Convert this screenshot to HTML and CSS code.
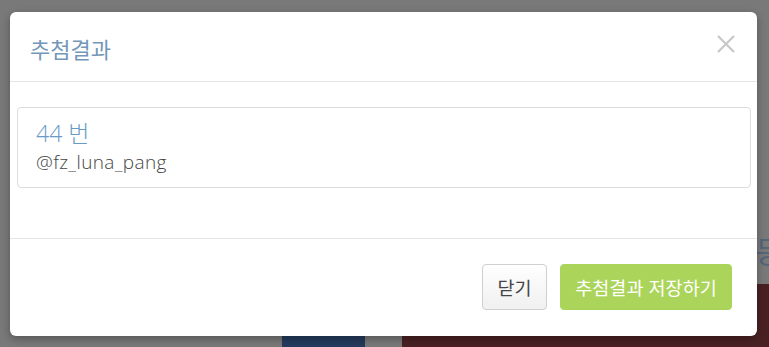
FILE: index.html
```html
<!DOCTYPE html>
<html lang="ko">
<head>
<meta charset="utf-8">
<link rel="stylesheet" href="styles.css">
</head>
<body>
<div class="page">
  <div class="page-top">
    <span class="peek">등</span>
  </div>
  <div class="page-row">
    <div class="gap1"></div>
    <div class="blue-block"></div>
    <div class="gap2"></div>
    <div class="red-block"></div>
  </div>
</div>
<div class="modal">
  <div class="modal-header">
    <h4 class="modal-title">추첨결과</h4>
    <button class="close" type="button" aria-label="close">
      <svg width="18" height="18" viewBox="0 0 18 18"><path d="M1 1 L17 17 M17 1 L1 17" stroke="#c8c8c8" stroke-width="2.2" fill="none"/></svg>
    </button>
  </div>
  <div class="modal-body">
    <div class="result">
      <div class="num">44 번</div>
      <div class="user">@fz_luna_pang</div>
    </div>
  </div>
  <div class="modal-footer">
    <button class="btn btn-default" type="button">닫기</button>
    <button class="btn btn-green" type="button">추첨결과 저장하기</button>
  </div>
</div>
</body>
</html>
```

FILE: styles.css
```css
* { box-sizing: border-box; }
html, body {
  margin: 0;
  padding: 0;
  width: 769px;
  height: 347px;
  overflow: hidden;
  background: #797979;
  font-family: "Open Sans", "Noto Sans CJK KR", sans-serif;
}
.page {
  height: 347px;
  display: flex;
  flex-direction: column;
}
.page-top {
  height: 284px;
  position: relative;
}
.peek {
  position: absolute;
  right: -14px;
  top: 232px;
  font-size: 30px;
  line-height: 36px;
  color: #55657a;
  font-family: "Noto Sans CJK KR", sans-serif;
}
.page-row {
  flex: 1;
  display: flex;
}
.gap1 { width: 282px; }
.blue-block { width: 83px; background: #243b5c; margin-top: 40px; }
.gap2 { width: 37px; }
.red-block { flex: 1; background: #4a2123; }

.modal {
  position: absolute;
  left: 10px;
  top: 12px;
  width: 747px;
  height: 324px;
  background: #fff;
  border-radius: 6px;
  box-shadow: 0 3px 9px rgba(0,0,0,0.3);
  display: flex;
  flex-direction: column;
}
.modal-header {
  height: 70px;
  border-bottom: 1px solid #e5e5e5;
  display: flex;
  align-items: center;
  justify-content: space-between;
  padding: 0 22px 0 20px;
}
.modal-title {
  margin: 0;
  font-family: "Noto Sans CJK KR", sans-serif;
  font-weight: 400;
  font-size: 22px;
  color: #7497b9;
  padding-top: 2px;
}
.close {
  border: 0;
  background: none;
  padding: 0;
  margin-top: -6px;
  display: flex;
}
.modal-body {
  height: 157px;
  padding: 25px 6px 0 7px;
  border-bottom: 1px solid #e5e5e5;
}
.result {
  border: 1px solid #dcdcdc;
  border-radius: 4px;
  height: 81px;
  padding: 10px 18px;
}
.num {
  font-size: 23px;
  line-height: 30px;
  font-weight: 300;
  color: #6a9bc6;
  font-family: "Open Sans", "Noto Sans CJK KR", sans-serif;
}
.user {
  font-size: 19px;
  line-height: 28px;
  font-weight: 300;
  letter-spacing: 0.35px;
  color: #444;
}
.modal-footer {
  flex: 1;
  display: flex;
  justify-content: flex-end;
  align-items: flex-start;
  gap: 13px;
  padding: 25px 25px 0 0;
}
.btn {
  height: 46px;
  border-radius: 4px;
  font-family: "Noto Sans CJK KR", sans-serif;
  font-size: 18.5px;
  padding: 0;
  cursor: pointer;
}
.btn-default {
  width: 65px;
  border: 1px solid #cfcfcf;
  background: linear-gradient(#ffffff, #f0f0f0);
  color: #444;
}
.btn-green {
  width: 172px;
  border: 1px solid #a9d35a;
  background: #abd45b;
  color: #fff;
}
```
